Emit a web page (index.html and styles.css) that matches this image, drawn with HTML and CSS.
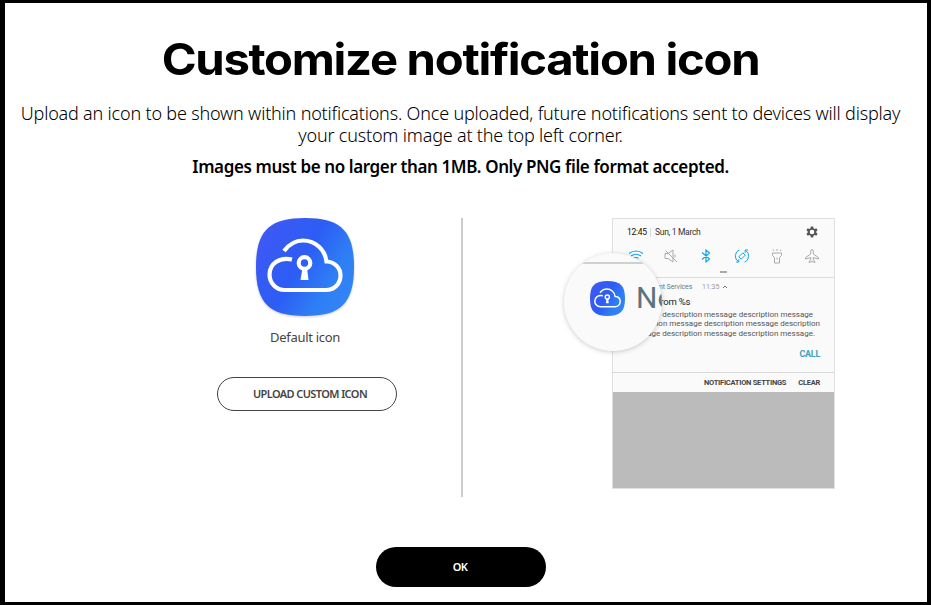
FILE: index.html
```html
<!DOCTYPE html>
<html lang="en">
<head>
<meta charset="utf-8">
<title>Customize notification icon</title>
<link rel="stylesheet" href="styles.css">
</head>
<body>
<svg class="defs" width="0" height="0" aria-hidden="true">
  <defs>
    <linearGradient id="blue" x1="0" y1="0.2" x2="1" y2="0.8">
      <stop offset="0" stop-color="#4058f4"/><stop offset="0.45" stop-color="#2c5df5"/><stop offset="0.75" stop-color="#2e7ef5"/><stop offset="1" stop-color="#3286f4"/>
    </linearGradient>
    <symbol id="cloud" viewBox="0 0 98 98">
      <path d="M49 0C85 0 98 13 98 49S85 98 49 98 0 85 0 49 13 0 49 0Z" fill="url(#blue)"/>
      <g fill="none" stroke="#fff" stroke-width="4.2">
        <path d="M28 33C34 25 40 22.500 47 22.500C60 22.500 69 32 70.500 43.500C79 44 84.500 50 84.500 57.500C84.500 66 78 72 70 72H29C20 72 13.500 65 13.500 56.500C13.500 46 23 38.500 36 41.500"/>
        <circle cx="48.500" cy="45" r="5.800"/>
      </g>
      <path d="M46.500 50H51L52.500 62H44.500Z" fill="#fff"/>
    </symbol>
  </defs>
</svg>
<main class="dialog">
  <h1 class="title">Customize notification icon</h1>
  <p class="intro">Upload an icon to be shown within notifications. Once uploaded, future notifications sent to devices will display<br>your custom image at the top left corner.</p>
  <p class="limits">Images must be no larger than 1MB. Only PNG file format accepted.</p>
  <div class="columns">
    <section class="current">
      <svg class="app-icon"><use href="#cloud"/></svg>
      <div class="caption">Default icon</div>
      <button class="upload">UPLOAD CUSTOM ICON</button>
    </section>
    <section class="preview">
      <div class="phone">
        <div class="status">
          <span class="clock">12:45</span><span class="date">Sun, 1 March</span>
          <svg class="gear" viewBox="0 0 24 24"><path fill="#555" fill-rule="evenodd" d="M10 2.500H14L14.600 5.600L16.500 6.700L19.500 5.700L21.500 9.200L19.200 11.200V12.800L21.500 14.800L19.500 18.300L16.500 17.300L14.600 18.400L14 21.500H10L9.400 18.400L7.500 17.300L4.500 18.300L2.500 14.800L4.800 12.800V11.200L2.500 9.200L4.500 5.700L7.500 6.700L9.400 5.600ZM12 8A4 4 0 1 0 12 16A4 4 0 1 0 12 8Z"/></svg>
        </div>
        <div class="toggles">
          <svg class="on" viewBox="0 0 16 16"><path d="M1 5.500Q8 .5 15 5.500M3 8Q8 4.500 13 8M5.500 10.300Q8 8.700 10.500 10.300"/><circle cx="8" cy="12.500" r=".8"/></svg>
          <svg viewBox="0 0 16 16"><path d="M2 5.500H5L10 2V14L5 10.500H2ZM2.500 2.500L14 14M12 6.500V9.500"/></svg>
          <svg class="on" viewBox="0 0 16 16"><path d="M4 4.500L11.500 11 8 14V2L11.500 5 4 11.500"/></svg>
          <svg class="on thin" viewBox="0 0 16 16"><path d="M4.800 8.800L8.800 4.800 11.200 7.200 7.200 11.200ZM5.500 1.800A6.700 6.700 0 0 0 4.500 13.700M2 14H4.800V11.200M10.500 14.200A6.700 6.700 0 0 0 11.500 2.300M14 2H11.200V4.800"/></svg>
          <svg viewBox="0 0 16 16"><path d="M3.500 5H12.500V7.500L10.500 9.500V15H5.500V9.500L3.500 7.500ZM8 9.500V11.500M8 1V3M4 1.500L5 3M12 1.500L11 3"/></svg>
          <svg viewBox="0 0 16 16"><path d="M8 1.500Q9.300 1.500 9.300 3.500V6L14.500 9.500V11L9.300 9.500V12L11 13.500V14.500L8 13.500 5 14.500V13.500L6.700 12V9.500L1.500 11V9.500L6.700 6V3.500Q6.700 1.500 8 1.500Z"/></svg>
        </div>
        <div class="handle"></div>
        <div class="notice">
          <div class="meta"><span class="source">nt Services</span><span class="time">11:35</span><svg class="chevron" viewBox="0 0 6 4"><path d="M1 3L3 1L5 3"/></svg></div>
          <div class="subject">from %s</div>
          <div class="message">
            <div class="row-a">e description message description message</div>
            <div class="row-b">tion message description message description</div>
            <div class="row-c">age description message description message.</div>
          </div>
          <div class="call">CALL</div>
        </div>
        <div class="actions"><span>NOTIFICATION SETTINGS</span><span>CLEAR</span></div>
        <div class="lens">
          <div class="lens-line"></div>
          <div class="lens-row"><svg class="lens-icon"><use href="#cloud"/></svg><span class="lens-text">No</span></div>
        </div>
      </div>
    </section>
  </div>
  <button class="ok">OK</button>
</main>
</body>
</html>
```
FILE: styles.css
```css
* { box-sizing: border-box; }
body { margin: 0; background: #000; font-family: "Noto Sans", sans-serif; color: #000; overflow: hidden; display: flex; }
.defs { position: absolute; }
.dialog {
  width: 922px; height: 599px; margin: 3px 0 0 5px; padding-right: 10px;
  background: #fff; display: flex; flex-direction: column; align-items: center; overflow: hidden;
}
.title { margin: 29px 2px 1px 0; font: 700 44px/54px Inter, sans-serif; letter-spacing: -1.2px; white-space: nowrap; transform: scaleX(1.073); }
.intro { margin: 15px 1px 0 0; font-size: 18px; line-height: 22px; font-weight: 300; letter-spacing: -0.19px; text-align: center; white-space: nowrap; }
.limits { margin: 10px 1px 0 0; font-size: 17px; line-height: 22px; font-weight: 600; letter-spacing: -0.39px; white-space: nowrap; }
.columns { width: 912px; height: 279px; margin-top: 40px; display: grid; grid-template-columns: 458px 1fr; }
.current { border-right: 2px solid #ccc; display: flex; flex-direction: column; align-items: flex-start; }
.app-icon { width: 98px; height: 98px; margin-left: 251px; filter: drop-shadow(0 1px 1px #0003); }
.caption { width: 98px; margin: 11px 0 0 251px; text-align: center; font-size: 13px; line-height: 20px; letter-spacing: -0.3px; color: #444; white-space: nowrap; }
.upload {
  width: 180px; height: 34px; margin: 30px 0 0 212px; padding: 0 0 2px 6px; border: 1px solid #444; border-radius: 17px;
  background: #fff; color: #444; font: 600 11px "Noto Sans", sans-serif; letter-spacing: -0.6px; white-space: nowrap;
}
.preview { padding-left: 149px; }
.phone {
  position: relative; width: 223px; height: 271px; border: 1px solid #e0e0e0; background: #bbb;
  font-family: Roboto, sans-serif; display: flex; flex-direction: column;
}
.status { height: 26px; padding: 0 15px 0 14px; background: #fafafa; display: flex; align-items: center; font-size: 8.5px; letter-spacing: -0.3px; color: #333; white-space: nowrap; }
.clock { width: 24px; height: 9px; line-height: 9px; color: #111; border-right: 1px solid #ddd; }
.date { margin-left: 4px; }
.gear { width: 14px; height: 14px; margin-left: auto; }
.toggles { height: 22px; padding: 0 14px 0 15px; background: #fafafa; display: flex; align-items: center; justify-content: space-between; }
.toggles svg { width: 16px; height: 16px; fill: none; stroke: #aaa; stroke-width: 1; }
.toggles .on { stroke: #16a3ec; stroke-width: 1.2; }
.toggles .thin { stroke-width: 1; }
.handle { height: 11px; padding: 4px 107px 5px; background: #fafafa; border-bottom: 1px solid #ddd; }
.handle::before { content: ""; display: block; height: 2px; background: #aaa; }
.notice { height: 94px; background: #fafafa; display: flex; flex-direction: column; color: #555; white-space: nowrap; }
.meta { height: 12px; margin-top: 3px; padding-left: 46px; display: flex; align-items: center; font-size: 7px; color: #607d8b; }
.source { width: 43px; letter-spacing: -0.1px; }
.time { width: 20px; color: #999; }
.chevron { width: 6px; height: 4px; fill: none; stroke: #607d8b; }
.subject { height: 14px; padding-left: 44px; margin-top: 2px; font-size: 9.5px; line-height: 14px; letter-spacing: -0.15px; color: #222; }
.message { margin-top: 1px; padding-right: 14px; font-size: 8px; line-height: 9.4px; text-align: right; }
.row-a { padding-right: 7px; }
.row-c { padding-right: 5px; }
.call { margin: 9px 14px 0 0; text-align: right; font-size: 9px; line-height: 14px; font-weight: 700; letter-spacing: -0.3px; color: #459fbc; }
.actions { height: 20px; padding-right: 14px; background: #fafafa; border-top: 1px solid #d8d8d8; display: flex; align-items: center; justify-content: flex-end; gap: 12px; font-size: 7.5px; font-weight: 700; letter-spacing: -0.25px; color: #444; white-space: nowrap; }
.lens { position: absolute; left: -49px; top: 34px; width: 98px; height: 98px; border-radius: 50%; overflow: hidden; background: #fafafa; box-shadow: 0 1px 5px #0003; }
.lens-line { height: 11px; border-bottom: 2px solid #d0d0d0; }
.lens-row { display: flex; align-items: center; height: 36px; margin: 16px 0 0 26px; }
.lens-icon { flex: none; width: 35px; height: 35px; }
.lens-text { margin-left: 11px; font-size: 30px; line-height: 36px; color: #5b7481; }
.ok { width: 170px; height: 40px; flex: none; margin-top: 50px; padding: 0 2px 2px 0; border: 0; border-radius: 20px; background: #000; color: #fff; font: 600 11px "Noto Sans", sans-serif; letter-spacing: -0.6px; }
```
